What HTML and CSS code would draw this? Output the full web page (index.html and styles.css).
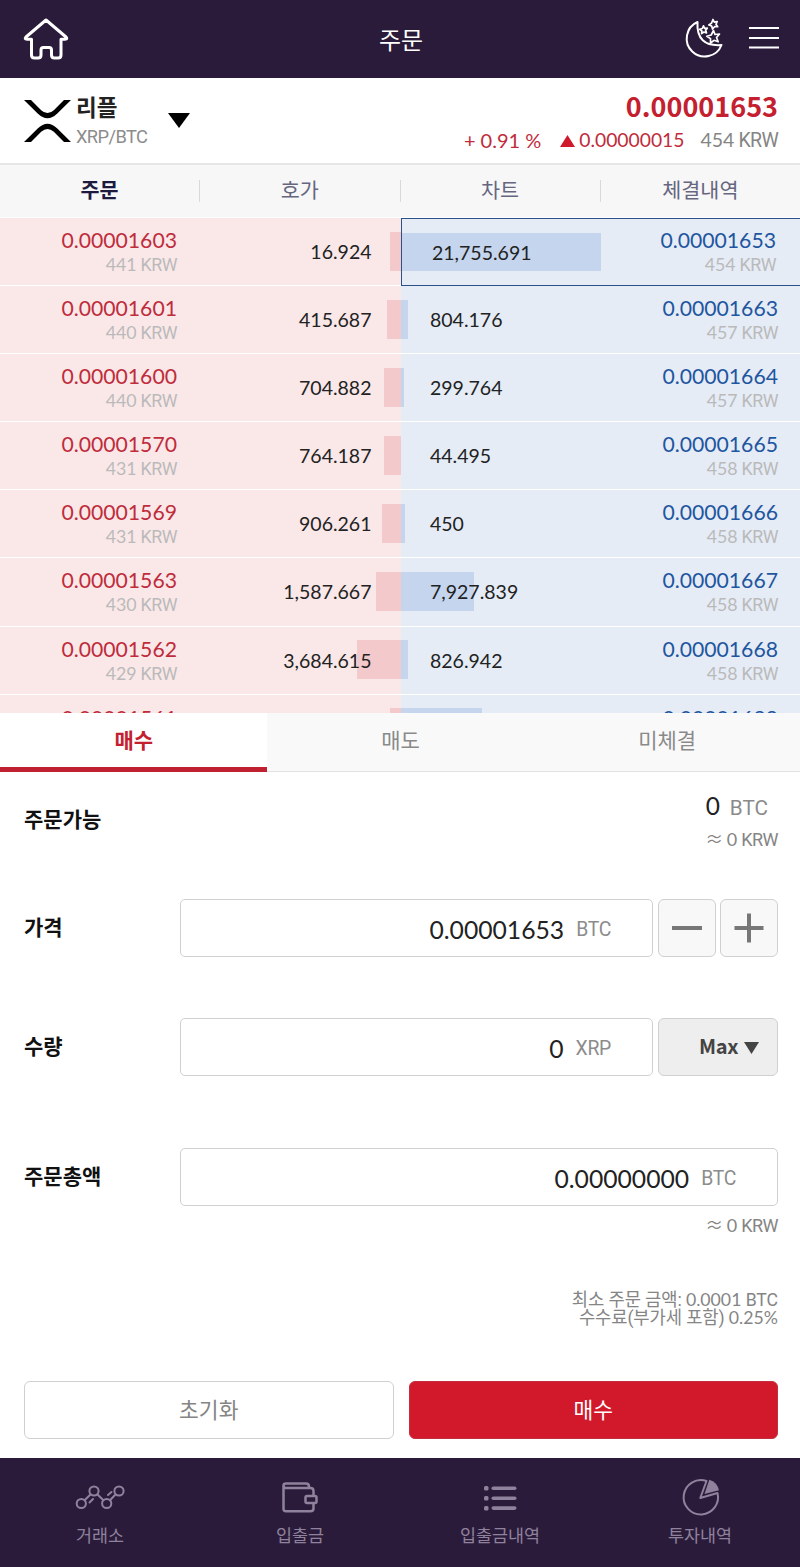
FILE: index.html
```html
<!DOCTYPE html>
<html lang="ko">
<head>
    <meta charset="UTF-8">
    <meta name="viewport" content="width=device-width, initial-scale=1.0">
    <title>주문</title>
    <link rel="stylesheet" href="styles.css">
</head>
<body>
    <header class="topbar">
        <svg class="home-icon" viewBox="0 0 46 44" width="46" height="44">
            <path d="M23 3 L3 20 Q1 22.300 4 22.300 H8.500 V38 Q8.500 41 11.500 41 H15 Q18 41 18 38 V33 Q18 30.500 20.500 30.500 H26 Q28.500 30.500 28.500 33 V38 Q28.500 41 31.500 41 H35 Q38 41 38 38 V22.300 H42 Q45 22.300 43 20 Z"/>
        </svg>
        <h1>주문</h1>
        <div class="top-icons">
            <svg class="moon-icon" viewBox="0 0 40 42" width="40" height="42">
                <path d="M13.500 4 A18 18 0 1 0 37.500 27 Q12 29 13.500 4 Z"/>
                <g class="stars">
                    <path d="M29 1.500 L30.300 4.200 L33.200 3.500 L32 6.300 L33.700 8.700 L30.600 8.700 L28.500 11 L27.700 8 L24.800 6.900 L27.400 5.300 Z"/>
                    <path d="M19.500 7.800 L20.600 10.300 L23.300 10.200 L21.600 12.300 L22.500 14.900 L19.900 14 L17.600 15.500 L17.800 12.800 L15.600 11.200 L18.300 10.500 Z"/>
                    <path d="M29.500 12.500 L31 16.500 L35.500 16 L32.500 19.500 L34.200 23.700 L30 22.300 L26.500 25 L26.500 20.600 L22.800 18.200 L27.200 17 Z"/>
                </g>
            </svg>
            <svg class="menu-icon" viewBox="0 0 30 24" width="30" height="24">
                <path d="M0 2 H30 M0 12 H30 M0 21.500 H30"/>
            </svg>
        </div>
    </header>

    <section class="coin">
        <svg class="coin-logo" viewBox="0 0 47 42" width="47" height="42">
            <path d="M0 0 H7 L17.200 10.200 Q23.500 16 29.800 10.200 L40 0 H47 L33.300 13.500 Q23.500 23 13.700 13.500 Z"/>
            <path d="M0 42 H7 L17.200 31.800 Q23.500 26 29.800 31.800 L40 42 H47 L33.300 28.500 Q23.500 19 13.700 28.500 Z"/>
        </svg>
        <div class="coin-name">
            <strong>리플</strong>
            <span>XRP/BTC</span>
        </div>
        <svg class="caret" viewBox="0 0 22 15" width="22" height="15"><path d="M0 0 H22 L11 15 Z"/></svg>
        <div class="coin-price">
            <strong>0.00001653</strong>
            <div class="change">
                <span class="rate">+ 0.91 %</span>
                <svg viewBox="0 0 15 12" width="15" height="12"><path d="M0 12 L7.500 0 L15 12 Z"/></svg>
                <span class="diff">0.00000015</span>
                <span class="krw"><b>454</b> KRW</span>
            </div>
        </div>
    </section>

    <nav class="tabs">
        <a class="active">주문</a>
        <a>호가</a>
        <a>차트</a>
        <a>체결내역</a>
    </nav>

    <section class="book">
        <div class="side bids">
            <div class="row"><div class="price">0.00001603<small><b>441</b> KRW</small></div><div class="amount"><i style="width:11px"></i><span>16.924</span></div></div>
            <div class="row"><div class="price">0.00001601<small><b>440</b> KRW</small></div><div class="amount"><i style="width:14px"></i><span>415.687</span></div></div>
            <div class="row"><div class="price">0.00001600<small><b>440</b> KRW</small></div><div class="amount"><i style="width:17px"></i><span>704.882</span></div></div>
            <div class="row"><div class="price">0.00001570<small><b>431</b> KRW</small></div><div class="amount"><i style="width:17px"></i><span>764.187</span></div></div>
            <div class="row"><div class="price">0.00001569<small><b>431</b> KRW</small></div><div class="amount"><i style="width:19px"></i><span>906.261</span></div></div>
            <div class="row"><div class="price">0.00001563<small><b>430</b> KRW</small></div><div class="amount"><i style="width:25px"></i><span>1,587.667</span></div></div>
            <div class="row"><div class="price">0.00001562<small><b>429</b> KRW</small></div><div class="amount"><i style="width:44px"></i><span>3,684.615</span></div></div>
            <div class="row"><div class="price">0.00001561</div><div class="amount"><i style="width:11px"></i></div></div>
        </div>
        <div class="side asks">
            <div class="row current"><div class="amount"><i style="width:199px"></i><span>21,755.691</span></div><div class="price">0.00001653<small><b>454</b> KRW</small></div></div>
            <div class="row"><div class="amount"><i style="width:7px"></i><span>804.176</span></div><div class="price">0.00001663<small><b>457</b> KRW</small></div></div>
            <div class="row"><div class="amount"><i style="width:3px"></i><span>299.764</span></div><div class="price">0.00001664<small><b>457</b> KRW</small></div></div>
            <div class="row"><div class="amount"><i style="width:0"></i><span>44.495</span></div><div class="price">0.00001665<small><b>458</b> KRW</small></div></div>
            <div class="row"><div class="amount"><i style="width:4px"></i><span>450</span></div><div class="price">0.00001666<small><b>458</b> KRW</small></div></div>
            <div class="row"><div class="amount"><i style="width:73px"></i><span>7,927.839</span></div><div class="price">0.00001667<small><b>458</b> KRW</small></div></div>
            <div class="row"><div class="amount"><i style="width:7px"></i><span>826.942</span></div><div class="price">0.00001668<small><b>458</b> KRW</small></div></div>
            <div class="row"><div class="amount"><i style="width:81px"></i></div><div class="price">0.00001699</div></div>
        </div>
    </section>

    <nav class="order-tabs">
        <a class="active">매수</a>
        <a>매도</a>
        <a>미체결</a>
    </nav>

    <main class="order">
        <div class="available">
            <label>주문가능</label>
            <div class="balance">
                <div class="balance-btc"><b>0</b>BTC</div>
                <div class="approx"><em>≈</em> <b>0</b> KRW</div>
            </div>
        </div>
        <div class="field price-field">
            <label>가격</label>
            <div class="input"><b>0.00001653</b><span>BTC</span></div>
            <button class="step"><svg viewBox="0 0 30 30" width="30" height="30"><path d="M0 15 H30"/></svg></button>
            <button class="step"><svg viewBox="0 0 30 30" width="30" height="30"><path d="M0.500 15 H29.500 M15 0.500 V29.500"/></svg></button>
        </div>
        <div class="field qty-field">
            <label>수량</label>
            <div class="input"><b>0</b><span>XRP</span></div>
            <button class="max"><span>Max</span><svg viewBox="0 0 15 12" width="15" height="12"><path d="M0 0 H15 L7.500 12 Z"/></svg></button>
        </div>
        <div class="field">
            <label>주문총액</label>
            <div class="input"><b>0.00000000</b><span>BTC</span></div>
        </div>
        <div class="approx total"><em>≈</em> <b>0</b> KRW</div>
        <div class="notes">
            <p>최소 주문 금액: <b>0.0001</b> BTC</p>
            <p>수수료(부가세 포함) <b>0.25%</b></p>
        </div>
        <div class="actions">
            <button class="reset">초기화</button>
            <button class="buy">매수</button>
        </div>
    </main>

    <footer class="bottom-nav">
        <a>
            <svg viewBox="0 0 50 40" width="50" height="40">
                <g class="line">
                    <circle cx="6.300" cy="26.500" r="4.600"/>
                    <circle cx="19" cy="14" r="4.600"/>
                    <circle cx="31.700" cy="26.500" r="4.600"/>
                    <circle cx="44" cy="14" r="4.600"/>
                    <path d="M9.600 23.300 L15.700 17.200 M22.300 17.200 L28.400 23.300 M35 23.300 L40.700 17.200 M14.500 25.500 L18 22 M33 18 L36.500 15"/>
                </g>
            </svg>
            거래소
        </a>
        <a>
            <svg viewBox="0 0 50 40" width="50" height="40">
                <g class="line thick">
                    <path d="M8.500 8 V32 Q8.500 34.200 11 34.200 H35.500 Q38.500 34.200 38.500 31.500 V26.500 M38.500 18 V14 Q38.500 11 35.500 11 H11 Q8.500 11 8.500 8.500 Q8.500 6.500 11 6.500 H31 Q34 6.500 34 9.500 V11"/>
                    <rect x="30.500" y="19" width="11" height="7" rx="1.500"/>
                </g>
            </svg>
            입출금
        </a>
        <a>
            <svg viewBox="0 0 50 40" width="50" height="40">
                <g class="solid">
                    <rect x="9" y="9" width="4.500" height="4.500" rx="1.500"/>
                    <rect x="9" y="19" width="4.500" height="4.500" rx="1.500"/>
                    <rect x="9" y="29" width="4.500" height="4.500" rx="1.500"/>
                    <rect x="16.500" y="9.500" width="25" height="3.600" rx="1.800"/>
                    <rect x="16.500" y="19.400" width="25" height="3.600" rx="1.800"/>
                    <rect x="16.500" y="29.300" width="25" height="3.600" rx="1.800"/>
                </g>
            </svg>
            입출금내역
        </a>
        <a>
            <svg viewBox="0 0 50 40" width="50" height="40">
                <path class="line" d="M31.500 4 A17.200 17.200 0 1 0 42.500 16 L25.300 21 Z"/>
                <path class="solid" d="M34.300 2.700 Q42 5 44 13.300 L29.500 17 Z"/>
            </svg>
            투자내역
        </a>
    </footer>
</body>
</html>
```
FILE: styles.css
```css
* {
    box-sizing: border-box;
}
body {
    font-family: Roboto, "Noto Sans CJK KR", sans-serif;
    background-color: #fff;
    color: #222;
    margin: 0;
    padding: 0;
}
h1, p {
    margin: 0;
    font-weight: normal;
}
svg {
    display: block;
    flex-shrink: 0;
}
b {
    font-family: Lato, sans-serif;
    font-weight: normal;
    letter-spacing: 0;
}
em {
    font-family: "Noto Sans CJK KR", sans-serif;
    font-style: normal;
}
button {
    font-family: inherit;
    padding: 0;
    border: 1.5px solid #d0d0d0;
    border-radius: 6px;
}
.topbar {
    display: grid;
    grid-template-columns: 1fr auto 1fr;
    align-items: center;
    height: 78px;
    padding: 0 21px 0 23px;
    background-color: #2b1b3b;
    color: #fff;
}
.topbar h1 {
    font-size: 24px;
    line-height: 34px;
    padding-top: 4px;
}
.home-icon, .moon-icon, .menu-icon {
    fill: none;
    stroke: #fff;
    stroke-width: 2.6;
    stroke-linejoin: round;
}
.home-icon {
    stroke-width: 3;
}
.top-icons {
    display: flex;
    align-items: center;
    justify-content: flex-end;
    gap: 25px;
}
.moon-icon, .menu-icon {
    stroke-width: 2;
}
.menu-icon {
    margin-bottom: 3px;
}
.stars {
    stroke-width: 1.7;
}
.coin {
    display: flex;
    align-items: center;
    height: 87px;
    padding: 0 22px 0 24px;
    border-bottom: 2px solid #e6e6e6;
}
.coin-name {
    width: 97px;
    padding-top: 3px;
    padding-left: 5px;
}
.coin-logo {
    width: 47px;
}
.coin-name strong {
    display: block;
    font-size: 22.5px;
    line-height: 30px;
}
.coin-name span {
    display: block;
    font-size: 18.3px;
    line-height: 28px;
    letter-spacing: -0.6px;
    color: #8c8c8c;
}
.caret {
    margin-bottom: 1px;
}
.coin-price {
    margin-left: auto;
    padding-top: 3px;
    text-align: right;
}
.coin-price strong {
    display: block;
    font-family: "Noto Sans CJK KR", sans-serif;
    font-size: 27px;
    line-height: 36px;
    color: #c4202f;
}
.change {
    display: flex;
    align-items: center;
    justify-content: flex-end;
    font-family: Lato, sans-serif;
    font-size: 19.3px;
    line-height: 32px;
    color: #bf2c3b;
}
.change .rate {
    font-size: 20px;
}
.change svg {
    margin: 2px 4px 0 19px;
    fill: #cf1a2b;
}
.change .krw {
    margin-left: 16px;
    font-family: Roboto, sans-serif;
    font-size: 19.5px;
    letter-spacing: -0.7px;
    color: #858585;
}
.tabs {
    display: flex;
    align-items: center;
    height: 52px;
    background-color: #f7f7f7;
}
.tabs a {
    flex: 1;
    text-align: center;
    font-size: 20.7px;
    line-height: 22px;
    color: #666680;
}
.tabs a + a {
    border-left: 1px solid #d9d9d9;
}
.tabs a.active {
    font-weight: bold;
    color: #1d1a40;
}
.book {
    display: flex;
    height: 496px;
    padding-top: 1px;
    overflow: hidden;
}
.side {
    width: 401px;
    font-family: Lato, sans-serif;
}
.asks {
    width: 399px;
}
.row {
    display: flex;
    height: 68.1px;
    border-bottom: 1.5px solid #fff;
    background-color: #fae8e9;
}
.asks .row {
    background-color: #e5ecf6;
}
.price {
    width: 177px;
    padding-top: 9px;
    text-align: right;
    font-size: 21.2px;
    line-height: 26px;
    color: #bf2c3b;
}
.row:last-child .price {
    padding-top: 10px;
}
.asks .price {
    width: 177px;
    color: #1f56a0;
}
.price small {
    display: block;
    font-family: Roboto, sans-serif;
    font-size: 17.8px;
    line-height: 22px;
    letter-spacing: -0.5px;
    color: #bababa;
}
.amount {
    position: relative;
    flex: 1;
    padding: 13px 29.5px 0 0;
    text-align: right;
    font-size: 19.5px;
    line-height: 41px;
}
.amount i {
    position: absolute;
    top: 13.5px;
    right: 0;
    height: 39px;
    background-color: #f4c9cb;
}
.amount span {
    position: relative;
}
.asks .amount {
    flex: none;
    width: 200px;
    padding: 13px 0 0 29px;
    text-align: left;
}
.asks .amount i {
    left: 0;
    right: auto;
    background-color: #c5d5ee;
}
.row.current {
    border: 1.5px solid #2a5288;
    border-right: 0;
}
.row.current .price {
    width: 174px;
    padding-top: 8px;
}
.row.current .amount {
    padding-top: 13px;
    padding-left: 30px;
}
.row.current .amount i {
    top: 14px;
    height: 38px;
}
.order-tabs {
    display: flex;
    height: 59px;
    background-color: #f9f9f9;
    border-bottom: 1px solid #e2e2e2;
}
.order-tabs a {
    flex: 1;
    height: 59px;
    padding-left: 1px;
    text-align: center;
    font-size: 21px;
    line-height: 56px;
    color: #8a8a8a;
}
.order-tabs a.active {
    background-color: #fff;
    border-bottom: 5px solid #c0202f;
    font-weight: bold;
    color: #c4202f;
}
.order {
    height: 686px;
    padding: 0 22px 0 24px;
}
label {
    width: 155.5px;
    font-size: 21px;
    font-weight: bold;
    color: #111;
}
.available {
    display: flex;
    align-items: center;
    justify-content: space-between;
    height: 127px;
    padding-bottom: 35px;
}
.balance {
    padding-top: 3px;
    text-align: right;
}
.balance-btc {
    padding-right: 10px;
    font-size: 20.7px;
    line-height: 36px;
    color: #8a8a8a;
}
.balance-btc b {
    margin-right: 10px;
    font-size: 24.5px;
    color: #222;
}
.approx {
    text-align: right;
    font-size: 18px;
    line-height: 25px;
    letter-spacing: -0.5px;
    color: #858585;
}
.field {
    display: flex;
    height: 58px;
    line-height: 59px;
}
.price-field {
    margin-bottom: 61px;
}
.qty-field {
    margin-bottom: 72px;
}
.input {
    display: flex;
    flex: 1;
    align-items: center;
    justify-content: flex-end;
    padding-right: 41px;
    border: 1.5px solid #d0d0d0;
    border-radius: 5px;
    font-size: 19.4px;
    letter-spacing: -0.3px;
    color: #8c8c8c;
}
.input b {
    margin-right: 12px;
    padding-top: 2px;
    font-size: 24.7px;
    color: #222;
}
.input span {
    padding-top: 2px;
}
.step {
    display: flex;
    align-items: center;
    justify-content: center;
    width: 58px;
    margin-left: 4.5px;
    background-color: #f8f8f8;
}
.step path {
    stroke: #777;
    stroke-width: 4;
}
.max {
    display: flex;
    align-items: center;
    justify-content: flex-end;
    gap: 6px;
    width: 120.5px;
    margin-left: 4.5px;
    padding-right: 18px;
    background-color: #eee;
    font-family: "Noto Sans CJK KR", sans-serif;
    font-size: 20px;
    line-height: 30px;
    letter-spacing: -0.4px;
    font-weight: bold;
    color: #444;
}
.max span {
    margin-bottom: 3px;
}
.max svg {
    margin-top: 2px;
    fill: #444;
}
.total {
    padding-top: 6px;
}
.notes {
    margin-top: 53px;
    text-align: right;
    font-size: 17.7px;
    line-height: 18px;
    letter-spacing: -0.1px;
    color: #858585;
}
.actions {
    display: flex;
    gap: 15px;
    margin-top: 54px;
}
.actions button {
    flex: 1;
    height: 58px;
    padding-bottom: 4px;
    background-color: #fff;
    font-size: 21.5px;
    color: #858585;
}
.actions .buy {
    border-color: #c2303f;
    background-color: #d2192b;
    color: #fff;
}
.bottom-nav {
    display: flex;
    height: 109px;
    padding-top: 19px;
    background-color: #2b1b3b;
}
.bottom-nav a {
    flex: 1;
    display: flex;
    flex-direction: column;
    align-items: center;
    gap: 6px;
    font-size: 17.4px;
    line-height: 26px;
    color: #8f829c;
}
.line {
    fill: none;
    stroke: #8f829c;
    stroke-width: 2;
    stroke-linecap: round;
    stroke-linejoin: round;
}
.line.thick {
    stroke-width: 2.5;
}
.solid {
    fill: #8f829c;
}
```
